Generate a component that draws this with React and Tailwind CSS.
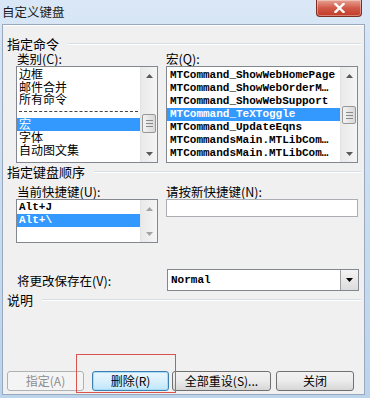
import React from 'react';

const MONO = "font-['Liberation_Mono',monospace]";

function Arrow({ dir = 'up', color = '#3b3b3b' }) {
  return (
    <svg width="7" height="4" viewBox="0 0 7 4">
      {dir === 'up'
        ? <path d="M0 4 L3.5 0 L7 4 Z" fill={color} />
        : <path d="M0 0 L3.5 4 L7 0 Z" fill={color} />}
    </svg>
  );
}

function ScrollBar({ thumbTop, thumbH, dim }) {
  const c = dim ? '#a3a3a3' : '#5a5a5a';
  return (
    <div className="w-[17px] flex flex-col bg-linear-to-r from-[#e9e9e9] to-[#f5f5f5] border-l border-[#e3e3e3]">
      <div className="h-[17px] flex items-center justify-center"><Arrow dir="up" color={c} /></div>
      <div className="flex-1 flex flex-col">
        {thumbH ? (
          <>
            <div style={{ height: thumbTop }} />
            <div
              className="mx-[1px] rounded-[2px] border border-[#979797] bg-linear-to-r from-[#f3f3f3] to-[#d8d8d8] flex flex-col items-center justify-center gap-[2px]"
              style={{ height: thumbH }}
            >
              {thumbH > 16 && (
                <>
                  <div className="w-[7px] h-px bg-[#8a8a8a]" />
                  <div className="w-[7px] h-px bg-[#8a8a8a]" />
                  <div className="w-[7px] h-px bg-[#8a8a8a]" />
                </>
              )}
            </div>
          </>
        ) : null}
      </div>
      <div className="h-[17px] flex items-center justify-center"><Arrow dir="down" color={c} /></div>
    </div>
  );
}

function GroupHead({ label, className = '' }) {
  return (
    <div className={`flex items-center h-[14px] ${className}`}>
      <span className="ml-[4px] text-[13px] leading-[14px] text-black">{label}</span>
      <div className="flex-1 ml-[9px] mr-[3px] border-t border-[#d5dfe5] border-b border-b-white" />
    </div>
  );
}

function Btn({ children, w, disabled, focused, className = '' }) {
  let cls = 'border-[#707070] text-black bg-linear-to-b from-[#f2f2f2] via-[#ebebeb] to-[#d6d6d6]';
  if (disabled) cls = 'border-[#adb2b5] text-[#8d8d8d] bg-[#f4f4f4]';
  if (focused) cls = 'border-[#3c7fb1] text-black bg-linear-to-b from-[#eaf6fd] via-[#d9f0fc] to-[#bee6fd] shadow-[inset_0_0_0_1px_#a6dcf8]';
  return (
    <div
      className={`h-[20px] rounded-[3px] border flex items-center justify-center text-[12px] leading-[12px] ${cls} ${className}`}
      style={{ width: w }}
    >
      {children}
    </div>
  );
}

export default function App() {
  const macros = [
    'MTCommand_ShowWebHomePage',
    'MTCommand_ShowWebOrderM…',
    'MTCommand_ShowWebSupport',
    'MTCommand_TeXToggle',
    'MTCommand_UpdateEqns',
    'MTCommandsMain.MTLibCom…',
    'MTCommandsMain.MTLibCom…',
  ];

  return (
    <div className="w-[370px] h-[398px] flex flex-col bg-linear-to-b from-[#d9e7f6] to-[#bcd3ec] font-['Noto_Sans_CJK_SC',sans-serif] text-black overflow-hidden relative">
      {/* title bar */}
      <div className="h-[24px] flex items-start shrink-0">
        <span className="ml-[2px] mt-[5px] text-[12.5px] leading-[14px] text-[#1b1b1b]">自定义键盘</span>
        <div className="ml-auto mr-[8px] w-[46px] h-[17px] rounded-b-[4px] border border-t-0 border-[#7c2e22] bg-linear-to-b from-[#e7a293] via-[#d0594a] to-[#c33a25] flex items-center justify-center shadow-[inset_0_0_0_1px_rgba(255,255,255,0.35)]">
          <svg width="11" height="10" viewBox="0 0 11 10">
            <path d="M1.5 1 L9.5 9 M9.5 1 L1.5 9" stroke="white" strokeWidth="2.4" strokeLinecap="square" />
          </svg>
        </div>
      </div>

      {/* client area */}
      <div className="ml-[2px] mr-[5px] h-[371px] shrink-0 border border-[#98a9bd] bg-[#f0f0f0] flex flex-col shadow-[inset_0_1px_0_#ffffff]">
        <GroupHead label="指定命令" className="mt-[12px]" />

        <div className="flex mt-[1px]">
          <div className="ml-[13px] w-[142px] flex flex-col">
            <span className="ml-[1px] text-[12.5px] leading-[13px] h-[13px]">类别(C):</span>
            <div className="mt-[1px] h-[97px] border border-[#828790] bg-white flex">
              <div className="flex-1 pt-[1px] text-[12px] leading-[12.5px]">
                <div className="h-[12.5px] pl-[2px]">边框</div>
                <div className="h-[12.5px] pl-[2px]">邮件合并</div>
                <div className="h-[12.5px] pl-[2px]">所有命令</div>
                <div className="h-[12.5px] pl-[2px] pr-[2px] flex items-center">
                  <div className="w-full border-t border-dashed border-[#444]" />
                </div>
                <div className="h-[13px] pl-[2px] bg-[#3399ff] text-white">宏</div>
                <div className="h-[12.5px] pl-[2px]">字体</div>
                <div className="h-[12.5px] pl-[2px]">自动图文集</div>
              </div>
              <ScrollBar thumbTop={30} thumbH={19} />
            </div>
          </div>

          <div className="ml-[8px] w-[192px] flex flex-col">
            <span className="text-[12.5px] leading-[13px] h-[13px]">宏(Q):</span>
            <div className="mt-[1px] h-[97px] border border-[#828790] bg-white flex">
              <div className={`flex-1 pt-[2px] text-[11px] leading-[13px] font-bold ${MONO} whitespace-nowrap overflow-hidden`}>
                {macros.map((m, i) => (
                  <div key={i} className={`h-[13px] pl-[3px] ${i === 3 ? 'bg-[#3399ff] text-white' : ''}`}>{m}</div>
                ))}
              </div>
              <ScrollBar thumbTop={22} thumbH={18} />
            </div>
          </div>
        </div>

        <GroupHead label="指定键盘顺序" className="mt-[2px]" />

        <div className="flex mt-[6px]">
          <div className="ml-[13px] w-[142px] flex flex-col">
            <span className="ml-[1px] text-[12.5px] leading-[13px] h-[13px]">当前快捷键(U):</span>
            <div className="mt-[1px] h-[44px] border border-[#828790] bg-white flex">
              <div className={`flex-1 pt-[1px] text-[11px] leading-[13px] font-bold ${MONO}`}>
                <div className="h-[13px] pl-[2px]">Alt+J</div>
                <div className="h-[13px] pl-[2px] bg-[#3399ff] text-white">Alt+\</div>
              </div>
              <ScrollBar dim />
            </div>
          </div>
          <div className="ml-[8px] w-[192px] flex flex-col">
            <span className="text-[12.5px] leading-[13px] h-[13px]">请按新快捷键(N):</span>
            <div className="mt-[1px] h-[18px] border border-[#abadb3] bg-white" />
          </div>
        </div>

        <div className="flex items-center mt-[26px]">
          <span className="ml-[14px] w-[150px] text-[12.5px] leading-[13px]">将更改保存在(V):</span>
          <div className="w-[192px] h-[22px] border border-[#828790] bg-white flex items-center">
            <span className={`flex-1 pl-[3px] text-[11px] font-bold ${MONO}`}>Normal</span>
            <div className="w-[18px] h-[20px] border-l border-[#a0a0a0] bg-linear-to-b from-[#f4f4f4] to-[#dcdcdc] flex items-center justify-center">
              <Arrow dir="down" color="#000" />
            </div>
          </div>
        </div>

        <GroupHead label="说明" className="mt-[2px]" />

        <div className="flex mt-[64px]">
          <Btn w={77} disabled className="ml-[4px]">指定(A)</Btn>
          <Btn w={77} focused className="ml-[8px]">删除(R)</Btn>
          <Btn w={99} className="ml-[3px]">全部重设(S)...</Btn>
          <Btn w={78} className="ml-[5px]">关闭</Btn>
        </div>
      </div>

      {/* annotation */}
      <div className="absolute left-[76px] top-[354px] w-[100px] h-[39px] border border-[#d9534f]" />
    </div>
  );
}
